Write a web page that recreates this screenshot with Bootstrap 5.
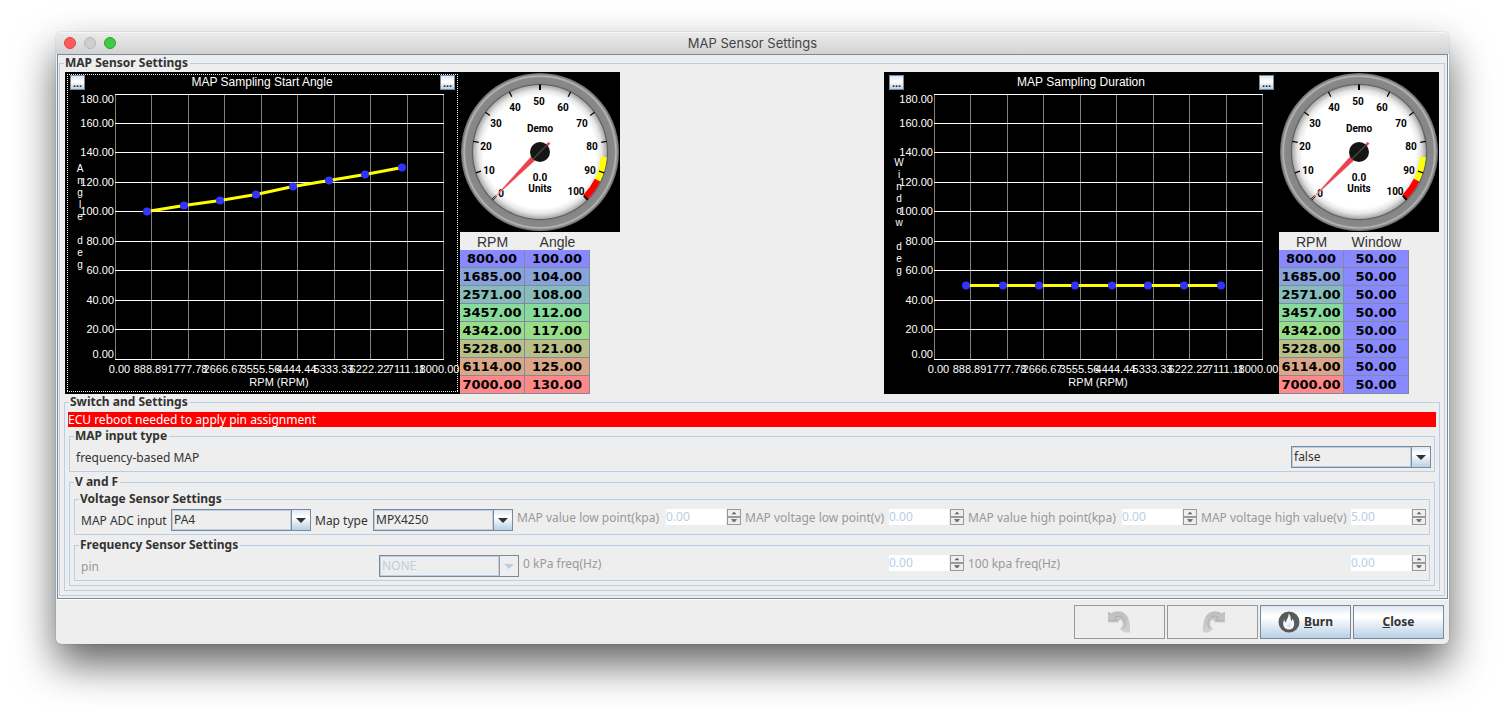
<!DOCTYPE html>
<html lang="en">
<head>
<meta charset="utf-8">
<meta name="viewport" content="width=device-width, initial-scale=1">
<title>MAP Sensor Settings</title>
<link rel="stylesheet" href="https://cdn.jsdelivr.net/npm/bootstrap@5.3.0/dist/css/bootstrap.min.css">
<style>
  :root { --edge:#7a8a99; --line:#b8cfe5; --face:#eeeeee; --ink:#333333; --off:#999999; }
  body { background:#fff; color:var(--ink); font:12px/16px "Noto Sans","Open Sans",sans-serif; padding:32px 56px; min-height:100vh; }
  .app-window { background:var(--face); border-radius:5px; box-shadow:0 0 1px rgba(0,0,0,.5),0 20px 40px rgba(0,0,0,.62); }
  .title-bar { height:22px; background:linear-gradient(#ececec,#d2d2d2); border-radius:5px 5px 0 0; box-shadow:inset 0 1px 0 #f6f6f6; font:13px/22px Inter,sans-serif; color:#444; }
  .lights { left:8px; top:5px; gap:8px; }
  .light { width:12px; height:12px; border:1px solid #e0443e; background:#fc5b57; border-radius:50%; }
  .light.idle { background:#cecece; border-color:#b8b8b8; }
  .light.zoom { background:#3ccb42; border-color:#27a52c; }
  .panel { margin:0 1px; border:1px solid var(--edge); padding:0 2px 2px 1px; box-shadow:0 1px 0 #fff,1px 0 0 #fff; }
  .group { border:1px solid var(--line); padding:1px 4px 4px; min-width:0; }
  .group > legend { font-size:12px; line-height:16px; font-weight:700; padding:0 2px 0 1px; margin:0; }
  .group.leaf { padding:2px 1px 3px 4px; }
  .group + .group { margin-top:2px; }
  .notice { background:#f00; color:#fff; line-height:15px; height:15px; margin:1px -1px; }

  .chart { width:395px; height:322px; background:#000; }
  .chart svg, .gauge svg { display:block; }
  .chart text { fill:#fff; font-family:"Liberation Sans",sans-serif; }
  .more { top:3px; width:15px; height:15px; border:1px solid var(--edge); background:linear-gradient(#d9e6f2,#fff 45%,#b8cfe5); color:#222; font:bold 11px/12px "Liberation Sans",sans-serif; padding:0; }
  .more.start { left:5px; } .more.end { right:5px; }
  .gauge { background:#000; width:160px; height:160px; }
  .gauge text { font:bold 10px Roboto,sans-serif; text-anchor:middle; fill:#000; }
  .curve { width:130px; table-layout:fixed; border-collapse:separate; border-spacing:0; text-align:center; color:#000; }
  .curve th { font:14px/16px "Liberation Sans",sans-serif; height:18px; padding:2px 0 0; color:var(--ink); }
  .curve td { font:bold 13px/17px "DejaVu Sans",sans-serif; height:18px; padding:0; border-right:1px solid #8089a0; border-bottom:1px solid #8089a0; }

  .fields { display:grid; }
  .fields > div { padding:0 2px; display:flex; justify-content:space-between; min-width:0; white-space:nowrap; }
  .six { grid-template-columns:234fr 202fr 228fr 223fr 233fr 229fr; }
  .three { grid-template-columns:442fr 445fr 462fr; }
  .fields label { line-height:18px; }
  .fields label.mid { line-height:22px; padding-top:1px; margin-bottom:-1px; }
  .off { color:var(--off); }
  .combo { width:140px; height:22px; flex:none; appearance:none; border:1px solid var(--edge); border-radius:0; color:var(--ink); font-size:12px; line-height:18px; padding:0 20px 0 2px;
    background:
      url("data:image/svg+xml,%3Csvg xmlns='http://www.w3.org/2000/svg' width='19' height='20'%3E%3Cdefs%3E%3ClinearGradient id='g' x2='0' y2='1'%3E%3Cstop stop-color='%23dde8f3'/%3E%3Cstop offset='.35' stop-color='%23fff'/%3E%3Cstop offset='1' stop-color='%23b8cfe5'/%3E%3C/linearGradient%3E%3C/defs%3E%3Cpath fill='url(%23g)' d='M0 0h19v20H0z'/%3E%3Cpath fill='%237a8a99' d='M0 0h1v20H0z'/%3E%3Cpath fill='%23333' d='M5 8h10l-5 5z'/%3E%3C/svg%3E") right top no-repeat,
      linear-gradient(var(--line),var(--line)) left top/100% 1px no-repeat,
      linear-gradient(var(--line),var(--line)) left bottom/100% 1px no-repeat,
      linear-gradient(var(--line),var(--line)) left top/1px 100% no-repeat,
      linear-gradient(var(--line),var(--line)) right 19px top/1px 100% no-repeat, var(--face); }
  .combo:disabled { color:var(--line); opacity:1;
    background:
      url("data:image/svg+xml,%3Csvg xmlns='http://www.w3.org/2000/svg' width='19' height='20'%3E%3Cpath fill='%23eee' d='M0 0h19v20H0z'/%3E%3Cpath fill='%23999' d='M0 0h1v20H0z'/%3E%3Cpath fill='%23b8cfe5' d='M5 8h10l-5 5z'/%3E%3C/svg%3E") right top no-repeat,
      linear-gradient(var(--line),var(--line)) left top/100% 1px no-repeat,
      linear-gradient(var(--line),var(--line)) left bottom/100% 1px no-repeat,
      linear-gradient(var(--line),var(--line)) left top/1px 100% no-repeat,
      linear-gradient(var(--line),var(--line)) right 19px top/1px 100% no-repeat, var(--face); }
  .spin { height:16px; gap:1px; }
  .spin input { width:60px; height:16px; border:0; padding:0; background:#fff; color:var(--line); font-size:12px; line-height:16px; }
  .spin button { width:14px; height:8px; border:1px solid var(--off); background:var(--face); padding:0; display:flex; align-items:center; justify-content:center; }
  .spin svg { display:block; }

  .commands { padding:6px 5px 5px; gap:2px; }
  .cmd { width:91px; height:34px; border:1px solid var(--edge); border-radius:0; padding:0; color:var(--ink); font-size:12px; line-height:16px; font-weight:700; background:linear-gradient(#dde8f3,#fff 30%,#fff 36%,#b8cfe5); }
  .cmd:disabled { background:var(--face); border-color:var(--off); opacity:1; }
</style>
</head>
<body>
<main class="app-window">
  <header class="title-bar position-relative text-center">
    <div class="lights position-absolute d-flex"><span class="light"></span><span class="light idle"></span><span class="light zoom"></span></div>
    MAP Sensor Settings
  </header>

  <div class="panel">
    <fieldset class="group">
      <legend class="float-none w-auto">MAP Sensor Settings</legend>

      <div class="d-flex justify-content-between" style="padding:0 1px">
        <section class="d-flex">
          <div class="chart position-relative" data-title="MAP Sampling Start Angle" data-axis="Angle deg" data-values="100,104,108,112,117,121,125,130" data-focus="1">
            <button type="button" class="more start position-absolute" aria-label="Left options">...</button>
            <button type="button" class="more end position-absolute" aria-label="Right options">...</button>
          </div>
          <div>
            <div class="gauge"></div>
            <table class="curve">
              <thead><tr><th>RPM</th><th>Angle</th></tr></thead>
              <tbody></tbody>
            </table>
          </div>
        </section>
        <section class="d-flex">
          <div class="chart position-relative" data-title="MAP Sampling Duration" data-axis="Window deg" data-values="50,50,50,50,50,50,50,50">
            <button type="button" class="more start position-absolute" aria-label="Left options">...</button>
            <button type="button" class="more end position-absolute" aria-label="Right options">...</button>
          </div>
          <div>
            <div class="gauge"></div>
            <table class="curve">
              <thead><tr><th>RPM</th><th>Window</th></tr></thead>
              <tbody></tbody>
            </table>
          </div>
        </section>
      </div>

      <fieldset class="group">
        <legend class="float-none w-auto">Switch and Settings</legend>
        <div class="notice">ECU reboot needed to apply pin assignment</div>

        <fieldset class="group leaf">
          <legend class="float-none w-auto">MAP input type</legend>
          <div class="fields"><div>
            <label class="mid" for="freqmap">frequency-based MAP</label>
            <select id="freqmap" class="combo"><option>false</option><option>true</option></select>
          </div></div>
        </fieldset>

        <fieldset class="group">
          <legend class="float-none w-auto">V and F</legend>
          <fieldset class="group leaf">
            <legend class="float-none w-auto">Voltage Sensor Settings</legend>
            <div class="fields six">
              <div><label class="mid" for="adc">MAP ADC input</label><select id="adc" class="combo"><option>PA4</option></select></div>
              <div><label class="mid" for="mtype">Map type</label><select id="mtype" class="combo"><option>MPX4250</option></select></div>
              <div><label class="off" for="vl">MAP value low point(kpa)</label><span class="spin d-flex"><input id="vl" value="0.00" disabled></span></div>
              <div><label class="off" for="ol">MAP voltage low point(v)</label><span class="spin d-flex"><input id="ol" value="0.00" disabled></span></div>
              <div><label class="off" for="vh">MAP value high point(kpa)</label><span class="spin d-flex"><input id="vh" value="0.00" disabled></span></div>
              <div><label class="off" for="oh">MAP voltage high value(v)</label><span class="spin d-flex"><input id="oh" value="5.00" disabled></span></div>
            </div>
          </fieldset>
          <fieldset class="group leaf">
            <legend class="float-none w-auto">Frequency Sensor Settings</legend>
            <div class="fields three">
              <div><label class="mid off" for="pin">pin</label><select id="pin" class="combo" disabled><option>NONE</option></select></div>
              <div><label class="off" for="f0">0 kPa freq(Hz)</label><span class="spin d-flex"><input id="f0" value="0.00" disabled></span></div>
              <div><label class="off" for="f1">100 kpa freq(Hz)</label><span class="spin d-flex"><input id="f1" value="0.00" disabled></span></div>
            </div>
          </fieldset>
        </fieldset>
      </fieldset>
    </fieldset>
  </div>

  <footer class="commands d-flex justify-content-end">
    <button type="button" class="cmd" disabled aria-label="Undo">
      <svg width="24" height="24" viewBox="0 0 24 24"><defs><linearGradient id="arrow" x2="0" y2="1"><stop stop-color="#bdbdbd"/><stop offset="1" stop-color="#d2d2d2"/></linearGradient></defs><path fill="url(#arrow)" d="M0 1.500L3.500 3.500C6.500 .5 13 .5 16.500 3.500C20.500 6.500 22.500 12 22 22.500H16L11.500 18.500C15.500 16.500 15.500 12.500 13 9.500L10.500 11V12.500H0Z"/><path fill="none" stroke="#aeaeae" d="M1 10.500H9L7 7.500C10 5.500 14 6 16 9.500C18 13 17 17 15 18.500"/></svg>
    </button>
    <button type="button" class="cmd" disabled aria-label="Redo">
      <svg width="24" height="24" viewBox="0 0 24 24"><g transform="matrix(-1 0 0 1 24 0)"><path fill="url(#arrow)" d="M0 1.500L3.500 3.500C6.500 .5 13 .5 16.500 3.500C20.500 6.500 22.500 12 22 22.500H16L11.500 18.500C15.500 16.500 15.500 12.500 13 9.500L10.500 11V12.500H0Z"/><path fill="none" stroke="#aeaeae" d="M1 10.500H9L7 7.500C10 5.500 14 6 16 9.500C18 13 17 17 15 18.500"/></g></svg>
    </button>
    <button type="button" class="cmd d-flex align-items-center justify-content-center gap-1"><svg width="22" height="22" viewBox="0 0 22 22"><circle cx="11" cy="11" r="10.500" fill="#5a5a5a"/><path fill="#f3f7fb" d="M10.500 2.500C13.500 5 12 8 13.500 10C14.200 9.300 14.400 8.500 14.200 7.500C17 10 17.500 18 11.500 18.500C5 18.500 4 12.500 6.300 8.500C6.500 10 7 11 8 11.500C8.500 8 11 6 10.500 2.500Z"/><path fill="#5a5a5a" d="M11.300 11C12.800 13 13.300 14 12.800 15.500C12 17.200 9.500 17 9.200 15.200C9 13.500 11 13 11.300 11Z" opacity=".12"/></svg><span><u>B</u>urn</span></button>
    <button type="button" class="cmd"><u>C</u>lose</button>
  </footer>
</main>

<script>
  const rpm = [800, 1685, 2571, 3457, 4342, 5228, 6114, 7000];
  const heat = ['#8888ff', '#88a2dc', '#88bcbc', '#88da9c', '#98de88', '#b8c088', '#daa688', '#ff8888'];

  // Chart: ten grid steps per axis, plot area 328 x 265 inside the panel
  document.querySelectorAll('.chart').forEach(el => {
    const X0 = 50, Y0 = 22, W = 328, H = 265;
    const px = v => X0 + v / 8000 * W, py = v => Y0 + H - v / 180 * H;
    const vals = el.dataset.values.split(',').map(Number);
    let s = '';
    for (let i = 0; i <= 9; i++) {
      const x = Math.round(px(i * 8000 / 9)) + .5;
      s += `<path d="M${x} ${Y0}V${Y0 + H}" stroke="#808080"/>`;
      const lx = i === 0 ? x + 4 : i === 9 ? x - 4 : x - 1;
      s += `<text x="${lx}" y="301" font-size="11" text-anchor="middle">${(i * 8000 / 9).toFixed(2)}</text>`;
    }
    for (let i = 0; i <= 9; i++) {
      const y = Math.floor(py(i * 20)) + .5;
      s += `<path d="M${X0} ${y}H${X0 + W + 1}" stroke="#fff"/>`;
      const ly = i === 0 ? y - 1.5 : i === 9 ? y + 8.5 : y + 3.5;
      s += `<text x="${X0 - 1}" y="${ly}" font-size="11" text-anchor="end">${(i * 20).toFixed(2)}</text>`;
    }
    s += `<text x="197" y="14" font-size="12" text-anchor="middle">${el.dataset.title}</text>`;
    s += `<text x="214" y="314" font-size="11" text-anchor="middle">RPM (RPM)</text>`;
    const a = el.dataset.axis;
    [...a].forEach((c, i) => { s += `<text x="15" y="${148 + (i - (a.length - 1) / 2) * 12}" font-size="10" text-anchor="middle">${c}</text>`; });
    const pts = vals.map((v, i) => [Math.floor(px(rpm[i])), Math.floor(py(v)) + .5]);
    s += `<polyline points="${pts.join(' ')}" fill="none" stroke="#ff0" stroke-width="3"/>`;
    pts.forEach(p => { s += `<circle cx="${p[0]}" cy="${p[1]}" r="4" fill="#3333ff"/>`; });
    if (el.dataset.focus) s += '<path d="M2 2.500H393M2 319.500H393M2.500 2V320M392.500 2V320" fill="none" stroke="#eee" stroke-dasharray="1 1"/>';
    el.insertAdjacentHTML('afterbegin', `<svg width="395" height="322">${s}</svg>`);

    el.parentElement.querySelector('tbody').innerHTML = rpm.map((r, i) => {
      const c = vals[0] === vals[7] ? heat[0] : heat[i];
      return `<tr><td style="background:${heat[i]}">${r.toFixed(2)}</td><td style="background:${c}">${vals[i].toFixed(2)}</td></tr>`;
    }).join('');
  });

  // Gauge: 0..100 swept over 270 degrees
  const at = (v, r) => { const t = (-135 + 2.7 * v) * Math.PI / 180; return [80 + r * Math.sin(t), 80 - r * Math.cos(t)]; };
  const arc = (a, b, c) => `<path d="M${at(a, 64)}A64 64 0 0 1 ${at(b, 64)}" fill="none" stroke="${c}" stroke-width="6"/>`;
  document.querySelectorAll('.gauge').forEach((el, n) => {
    let s = `<defs>
      <radialGradient id="rim${n}" gradientUnits="userSpaceOnUse" cx="80" cy="80" r="79"><stop offset=".85" stop-color="#555"/><stop offset=".87" stop-color="#858585"/><stop offset=".92" stop-color="#888"/><stop offset=".94" stop-color="#888"/><stop offset=".96" stop-color="#b8b8b8"/><stop offset=".98" stop-color="#888"/><stop offset="1" stop-color="#666"/></radialGradient>
      <radialGradient id="dial${n}"><stop offset=".84" stop-color="#fff"/><stop offset=".92" stop-color="#e6e6e6"/><stop offset="1" stop-color="#a8a8a8"/></radialGradient></defs>
      <circle cx="80" cy="80" r="79" fill="url(#rim${n})"/><circle cx="80" cy="80" r="67" fill="url(#dial${n})"/>`;
    s += arc(85, 93, '#ff0') + arc(93, 100, '#f00');
    for (let v = 0; v <= 100; v += 10) s += `<path d="M${at(v, 67.5)}L${at(v, 62)}" stroke="#000" stroke-width="${v % 50 ? 1.2 : 2}"/>`;
    [[0,-39,41],[10,-51,18],[20,-54,-6],[30,-44,-29],[40,-25,-45],[50,-1,-51],[60,23,-45],[70,42,-29],[80,52,-6],[90,50,18],[100,36,39]]
      .forEach(([v, x, y]) => { s += `<text x="${80 + x}" y="${84 + y}">${v}</text>`; });
    s += `<text x="80" y="60">Demo</text><text x="80" y="109">0.0</text><text x="80" y="120">Units</text>
      <path d="M88.500 70L90.500 71.500L75 88.500L32.500 127.500L71 84.500Z" fill="#e8434e" stroke="#f3b5b8" stroke-width=".6"/>
      <circle cx="80" cy="80" r="10" fill="#151515"/><path d="M73 87L87 73" stroke="#444" stroke-width="1.500"/>`;
    el.innerHTML = `<svg width="160" height="160">${s}</svg>`;
  });

  // Up and down steppers beside each numeric box
  document.querySelectorAll('.spin').forEach(el => {
    el.insertAdjacentHTML('beforeend', `<span><button type="button" disabled aria-label="Increase"><svg width="6" height="4"><path d="M1 3L3 1L5 3Z" fill="#666" stroke="#666" stroke-width=".5"/></svg></button><button type="button" disabled aria-label="Decrease"><svg width="6" height="4"><path d="M0 0H6L4 3H2Z" fill="#777"/></svg></button></span>`);
  });
</script>
<script src="https://cdn.jsdelivr.net/npm/bootstrap@5.3.0/dist/js/bootstrap.bundle.min.js"></script>
</body>
</html>
